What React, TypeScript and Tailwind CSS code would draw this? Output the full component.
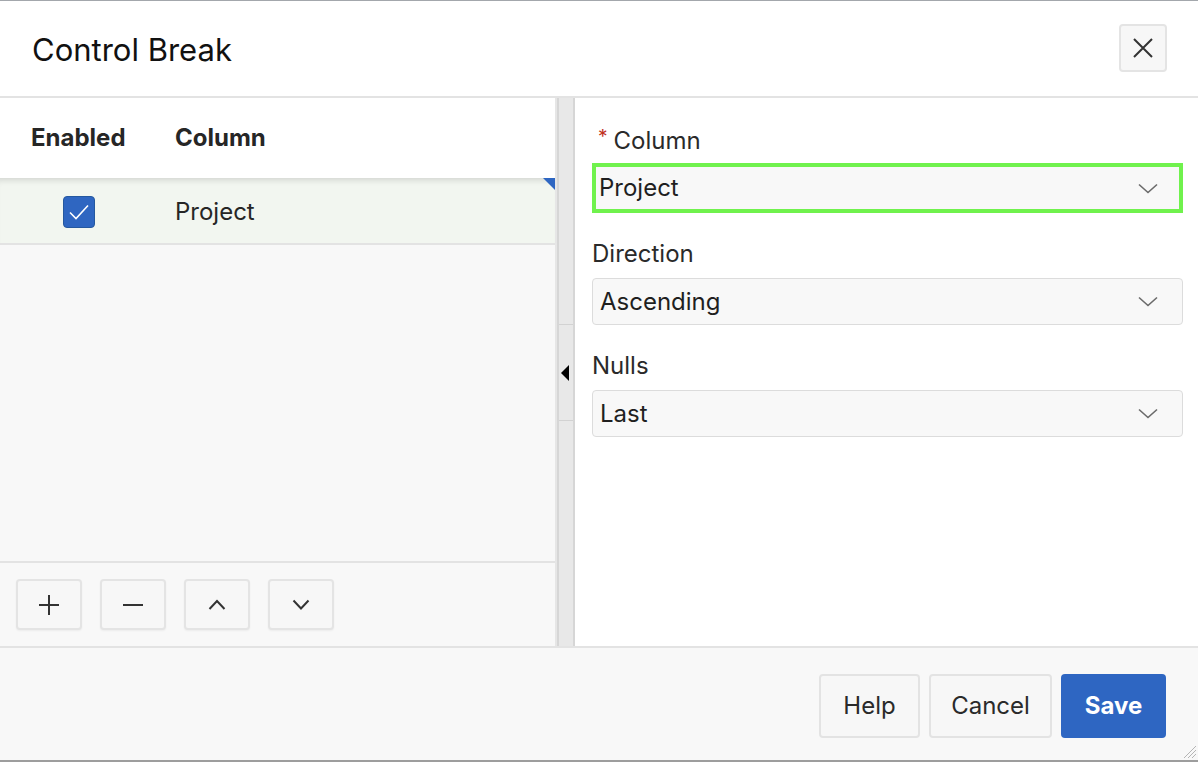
import { ReactNode } from "react";

function Chevron({ className }: { className?: string }) {
    return (
        <svg width="20" height="11" viewBox="0 0 20 11" className={className}>
            <path d="M1 1.5 L10 9.5 L19 1.5" fill="none" stroke="#6b6b6b" strokeWidth="1.6" />
        </svg>
    );
}

function Select({ value, highlight }: { value: string; highlight?: boolean }) {
    return (
        <div
            className={
                highlight
                    ? "h-[50px] flex items-center justify-between pl-[3px] pr-[21px] bg-[#f8f8f8] border-4 border-[#70f24d]"
                    : "h-[47px] flex items-center justify-between pl-[7px] pr-[24px] bg-[#f8f8f8] border border-[#dcdcdc] rounded-[4px]"
            }
        >
            <span className="text-[24px] text-[#1f1f1f]">{value}</span>
            <Chevron />
        </div>
    );
}

function Field({ label, required, children }: { label: string; required?: boolean; children: ReactNode }) {
    return (
        <div className="flex flex-col">
            <div className="h-[30px] flex items-center text-[24px] text-[#2a2a2a]">
                {required && <span className="text-[#c0301e] text-[19px] ml-[6px] mr-[6px] -mt-[8px]">*</span>}
                {label}
            </div>
            <div className="mt-[9px]">{children}</div>
        </div>
    );
}

function ToolButton({ children }: { children: ReactNode }) {
    return (
        <button className="w-[66px] h-[51px] flex items-center justify-center bg-[#f7f7f7] border-2 border-[#e4e4e4] rounded-[4px] shadow-[0_1px_2px_rgba(0,0,0,0.05)]">
            {children}
        </button>
    );
}

function FooterButton({ children, primary, w }: { children: ReactNode; primary?: boolean; w: string }) {
    return (
        <button
            className={
                primary
                    ? `${w} h-[64px] rounded-[4px] bg-[#2e66c2] text-white font-bold text-[24px]`
                    : `${w} h-[64px] rounded-[4px] bg-[#f7f7f7] border-2 border-[#e3e3e3] text-[#2a2a2a] text-[24px]`
            }
        >
            {children}
        </button>
    );
}

export default function App() {
    return (
        <div className="w-[1198px] h-[762px] flex flex-col bg-white border-t border-[#a3a7ac] font-['Inter',sans-serif] overflow-hidden">
            <div className="h-[97px] shrink-0 flex items-center justify-between pl-[32px] pr-[31px] border-b-2 border-[#e3e3e3]">
                <h1 className="text-[31px] text-[#111] mt-[3px]">Control Break</h1>
                <button className="w-[48px] h-[48px] flex items-center justify-center bg-[#f7f7f7] border-2 border-[#e4e4e4] rounded-[4px] -mt-[2px]">
                    <svg width="22" height="22" viewBox="0 0 22 22">
                        <path d="M2 2 L20 20 M20 2 L2 20" stroke="#333" strokeWidth="2" />
                    </svg>
                </button>
            </div>

            <div className="flex-1 flex min-h-0">
                <div className="w-[557px] shrink-0 flex flex-col bg-[#f8f8f8] border-r-2 border-[#e6e6e6]">
                    <div className="h-[80px] shrink-0 flex items-center bg-white text-[24px] font-bold text-[#262626]">
                        <div className="w-[175px] pl-[31px]">Enabled</div>
                        <div>Column</div>
                    </div>
                    <div className="relative h-[67px] shrink-0 flex items-center bg-[#f2f6f0] border-b-2 border-[#e3e3e3] shadow-[inset_0_7px_6px_-5px_rgba(0,0,0,0.14)]">
                        <div className="w-[175px] pl-[31px] mt-[2px]">
                            <div className="w-[96px] flex justify-center">
                                <div className="w-[32px] h-[32px] rounded-[4px] bg-[#2f66c1] border border-[#25589f] flex items-center justify-center">
                                    <svg width="22" height="18" viewBox="0 0 22 18">
                                        <path d="M2 9.5 L8 15.5 L20 2.5" fill="none" stroke="white" strokeWidth="1.6" />
                                    </svg>
                                </div>
                            </div>
                        </div>
                        <div className="text-[24px] text-[#262626] mt-[2px]">Project</div>
                        <div className="absolute top-0 right-0 w-0 h-0 border-t-[12px] border-t-[#2e66c2] border-l-[12px] border-l-transparent" />
                    </div>
                    <div className="flex-1" />
                    <div className="h-[85px] shrink-0 flex items-center gap-[18px] pl-[16px] border-t-2 border-[#e3e3e3]">
                        <ToolButton>
                            <svg width="22" height="22" viewBox="0 0 22 22">
                                <path d="M11 1 V21 M1 11 H21" stroke="#333" strokeWidth="2" />
                            </svg>
                        </ToolButton>
                        <ToolButton>
                            <svg width="22" height="4" viewBox="0 0 22 4">
                                <path d="M1 2 H21" stroke="#333" strokeWidth="2" />
                            </svg>
                        </ToolButton>
                        <ToolButton>
                            <svg width="18" height="11" viewBox="0 0 18 11">
                                <path d="M1.5 10 L9 2 L16.5 10" fill="none" stroke="#333" strokeWidth="2" />
                            </svg>
                        </ToolButton>
                        <ToolButton>
                            <svg width="18" height="11" viewBox="0 0 18 11">
                                <path d="M1.5 1.5 L9 9.5 L16.5 1.5" fill="none" stroke="#333" strokeWidth="2" />
                            </svg>
                        </ToolButton>
                    </div>
                </div>

                <div className="w-[18px] shrink-0 flex flex-col bg-[#e8e8e8] border-l-2 border-r-2 border-[#d6d6d6]">
                    <div className="h-[227px] border-b border-[#d2d2d2]" />
                    <div className="h-[95px] flex items-center pl-[2px]">
                        <div className="w-0 h-0 border-y-[8px] border-y-transparent border-r-[8px] border-r-black" />
                    </div>
                    <div className="flex-1 border-t border-[#d2d2d2]" />
                </div>

                <div className="flex-1 flex flex-col gap-[26px] pt-[28px] pl-[17px] pr-[15px] bg-white">
                    <Field label="Column" required>
                        <div className="-mt-[2px]">
                            <Select value="Project" highlight />
                        </div>
                    </Field>
                    <Field label="Direction">
                        <Select value="Ascending" />
                    </Field>
                    <Field label="Nulls">
                        <Select value="Last" />
                    </Field>
                </div>
            </div>

            <div className="relative h-[116px] shrink-0 flex items-center justify-end gap-[9px] pr-[32px] pt-[3px] bg-[#f8f8f8] border-t-2 border-b-2 border-t-[#e3e3e3] border-b-[#9d9d9d]">
                <FooterButton w="w-[101px]">Help</FooterButton>
                <FooterButton w="w-[123px]">Cancel</FooterButton>
                <FooterButton w="w-[105px]" primary>Save</FooterButton>
                <svg width="16" height="16" viewBox="0 0 16 16" className="absolute right-[1px] bottom-[1px]">
                    <path d="M15 3 L3 15 M15 7 L7 15 M15 11 L11 15" stroke="#b5b5b5" strokeWidth="1" />
                </svg>
            </div>
        </div>
    );
}
